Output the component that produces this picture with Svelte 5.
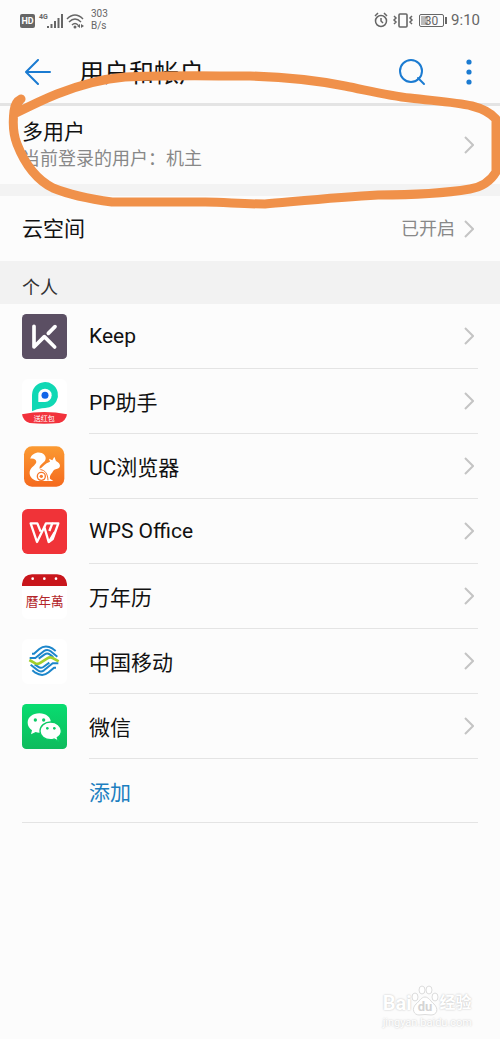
<script>
    const apps = [
        { id: "keep", name: "Keep" },
        { id: "pp", name: "PP助手" },
        { id: "uc", name: "UC浏览器" },
        { id: "wps", name: "WPS Office" },
        { id: "calendar", name: "万年历" },
        { id: "mobile", name: "中国移动" },
        { id: "wechat", name: "微信" },
    ];
</script>

{#snippet chevron()}
    <svg class="chevron" viewBox="0 0 10 18" aria-hidden="true">
        <path d="M1 1L9 9L1 17" />
    </svg>
{/snippet}

{#snippet appIcon(id)}
    <svg class="app-icon" viewBox="0 0 135 135" aria-hidden="true">
        {#if id === "keep"}
            <rect width="135" height="135" rx="13" fill="#5b4f63" />
            <g fill="none" stroke="#fff" stroke-width="11" stroke-linecap="round" stroke-linejoin="round">
                <path d="M36 37V99L67 68L98 99" />
                <path d="M79 58L99 38" />
            </g>
        {:else if id === "pp"}
            <rect width="135" height="135" rx="18" fill="#fff" />
            <path d="M30 97V48a39 39 0 1 1 52 37Q68 88 60 88Q44 90 30 97Z" fill="#10d8b4" />
            <path d="M49 69V49a20 20 0 1 1 20 20Z" fill="#fff" />
            <circle cx="69" cy="49" r="10.500" fill="#1266e8" />
            <path d="M0 106Q67 92 135 106Q132 126 112 132Q67 137 23 132Q3 126 0 106Z" fill="#f2323c" />
            <text x="67" y="126" text-anchor="middle" font-size="21" fill="#fff">送红包</text>
        {:else if id === "uc"}
            <defs>
                <linearGradient id="uc-fill" x1="0" y1="0" x2="0" y2="1">
                    <stop offset="0" stop-color="#fb9a32" />
                    <stop offset="1" stop-color="#f56a1e" />
                </linearGradient>
            </defs>
            <rect x="6" y="7" width="121" height="121" rx="24" fill="url(#uc-fill)" />
            <g transform="translate(-66 -26)">
                <path
                    d="M91 70C94 55 112 48 125 53C138 58 141 72 132 80C124 87 117 92 119 100C127 98 131 89 140 84C143 82 147 80 150 79L147 70L157 75L163 64L168 77C178 82 184 91 177 98C170 102 163 101 160 106C157 113 148 118 150 130L160 137H120C100 137 87 125 89 109C91 96 107 90 109 80C109 73 101 68 91 70Z"
                    fill="#fff"
                />
                <circle cx="124" cy="123" r="12" fill="none" stroke="#f6772a" stroke-width="4" />
                <circle cx="124" cy="123" r="5" fill="#f6772a" />
                <path d="M121 103C135 104 143 115 144 135" fill="none" stroke="#f6772a" stroke-width="3" />
            </g>
        {:else if id === "wps"}
            <rect width="135" height="135" rx="17" fill="#f03338" />
            <g fill="none" stroke="#fff" stroke-width="7" stroke-linejoin="round">
                <path d="M56 68L46 43H26L45 99L67 54L80 99L98 70" />
                <path d="M67 54L72 43H91L82 66" />
                <path d="M80 99L92 90L109 43H91" />
            </g>
        {:else if id === "calendar"}
            <rect width="135" height="135" rx="18" fill="#fff" />
            <path d="M0 36V30Q4 2 30 1H105Q131 2 135 30V36Z" fill="#c9161c" />
            <g fill="#fff">
                <circle cx="32" cy="14" r="4" />
                <circle cx="67" cy="14" r="4" />
                <circle cx="102" cy="14" r="4" />
            </g>
            <text class="seal" x="68" y="95" text-anchor="middle" font-size="38" fill="#b3262a">曆年萬</text>
        {:else if id === "mobile"}
            <rect width="135" height="135" rx="18" fill="#fff" />
            <g fill="none" stroke="#1c86cb" stroke-width="6" stroke-linejoin="round">
                {#each [0, 180] as turn}
                    <g transform="rotate({turn} 66 65)">
                        <path d="M30 44H36L52 30Q70 15 92 29L101 36" />
                        <path d="M23 57H40L66 36Q76 29 86 37L106 53" />
                        <path d="M50 59L68 46Q76 41 84 47L94 54" />
                    </g>
                {/each}
            </g>
            <path
                d="M22 63L40 73Q48 77 56 71L76 58Q84 53 92 57L110 67"
                fill="none"
                stroke="#a2cf2c"
                stroke-width="8"
                stroke-linejoin="round"
            />
        {:else if id === "wechat"}
            <defs>
                <linearGradient id="wechat-fill" x1="0" y1="0" x2="0" y2="1">
                    <stop offset="0" stop-color="#08dc70" />
                    <stop offset="1" stop-color="#0fbb5d" />
                </linearGradient>
            </defs>
            <rect width="135" height="135" rx="13" fill="url(#wechat-fill)" />
            <path d="M52 28C32 28 17 40 17 56C17 65 22 73 30 79L27 91L41 84Q46 86 52 86C72 86 87 73 87 57C87 40 72 28 52 28Z" fill="#fff" />
            <path
                d="M86 54C68 54 54 66 54 81C54 96 68 107 86 107Q91 107 96 105L109 111L106 101C114 96 118 89 118 81C118 66 104 54 86 54Z"
                fill="#fff"
                stroke="#0ccb66"
                stroke-width="4"
            />
            <g fill="#0ecb67">
                <circle cx="40" cy="48" r="5" />
                <circle cx="65" cy="48" r="5" />
                <circle cx="76" cy="73" r="4" />
                <circle cx="97" cy="73" r="4" />
            </g>
        {/if}
    </svg>
{/snippet}

<div class="page">
    <div class="status-bar">
        <svg width="66" height="18" viewBox="0 0 66 18" aria-hidden="true">
            <rect x="0" y="3" width="15" height="14" rx="2" fill="#666" />
            <text x="7.500" y="13" text-anchor="middle" font-size="9" font-weight="700" fill="#fff">HD</text>
            <text x="19" y="8" font-size="7" font-weight="700" fill="#666">4G</text>
            <path d="M28 17V15M31.500 17V13M35 17V10M38.500 17V7M42 17V3" stroke="#666" stroke-width="2" />
            <path
                d="M47 8Q55 0 63 8M49 11Q55 5 61 11M52 14Q55 11 58 14"
                fill="none"
                stroke="#666"
                stroke-width="1.500"
            />
            <circle cx="55" cy="16" r="1.500" fill="#666" />
            <path d="M60 13L57 15L60 17ZM61 13L64 15L61 17Z" fill="#666" />
        </svg>
        <div class="speed">
            <span>303</span>
            <span>B/s</span>
        </div>
        <div class="status-right">
            <svg width="74" height="16" viewBox="0 0 74 16" fill="none" stroke="#666" aria-hidden="true">
                <circle cx="7" cy="9" r="5.500" stroke-width="1.500" />
                <path d="M7 6V9L9 11M1 4L4 1M10 1L13 4" stroke-width="1.500" />
                <rect x="25" y="2" width="8" height="13" rx="1" stroke-width="1.600" />
                <path d="M20 4L22 6L20 8L22 10L20 12M38 4L36 6L38 8L36 10L38 12" stroke-width="1.500" />
                <rect x="45.500" y="2.500" width="24" height="12" rx="1.500" />
                <rect x="47" y="4" width="7" height="9" fill="#bbb" stroke="none" />
                <path d="M72 5V12" stroke-width="2" />
                <text x="57.500" y="13" text-anchor="middle" font-size="12" fill="#666" stroke="none">30</text>
            </svg>
            <time>9:10</time>
        </div>
    </div>

    <header class="header">
        <button class="icon-button" aria-label="返回">
            <svg width="26" height="26" viewBox="0 0 26 26">
                <path d="M25 13H2M13 1L1 13L13 25" />
            </svg>
        </button>
        <h1 class="title">用户和帐户</h1>
        <button class="icon-button" aria-label="搜索">
            <svg width="28" height="28" viewBox="0 0 28 28">
                <circle cx="13" cy="13" r="11" />
                <path d="M20 20L26 26" />
            </svg>
        </button>
        <button class="icon-button more" aria-label="更多">
            <svg width="6" height="26" viewBox="0 0 6 26">
                <circle class="dot" cx="3" cy="3" r="2.600" />
                <circle class="dot" cx="3" cy="13" r="2.600" />
                <circle class="dot" cx="3" cy="23" r="2.600" />
            </svg>
        </button>
    </header>

    <main>
        <button class="row users">
            <span class="label">
                多用户
                <small>当前登录的用户：机主</small>
            </span>
            {@render chevron()}
        </button>
        <button class="row cloud">
            <span class="label">云空间</span>
            <span class="value">已开启</span>
            {@render chevron()}
        </button>

        <h2 class="section">个人</h2>
        <ul class="apps">
            {#each apps as app}
                <li>
                    <button class="app">
                        {@render appIcon(app.id)}
                        <span class="app-name">
                            {app.name}
                            {@render chevron()}
                        </span>
                    </button>
                </li>
            {/each}
        </ul>
        <button class="add">添加</button>
    </main>

    <footer class="watermark">
        <div class="brand">
            <span>Bai</span>
            <svg width="28" height="32" viewBox="0 0 28 32" aria-hidden="true">
                <g fill="#fff" stroke="#dcdcdc">
                    <ellipse cx="4" cy="12" rx="3" ry="4" />
                    <ellipse cx="11" cy="5" rx="3" ry="4" />
                    <ellipse cx="18" cy="5" rx="3" ry="4" />
                    <ellipse cx="24" cy="12" rx="3" ry="4" />
                    <path d="M14 12C10 12 8 17 5 19C0 24 3 30 8 30Q14 29 20 30C26 30 28 24 23 19C20 17 18 12 14 12Z" />
                </g>
                <text class="du" x="14" y="26" text-anchor="middle" font-size="13" font-weight="700" fill="#d4d4d4">du</text>
            </svg>
            <span class="brand-cn">经验</span>
        </div>
        <div class="site">jingyan.baidu.com</div>
    </footer>

    <svg class="marker" viewBox="0 0 500 220" preserveAspectRatio="none" aria-hidden="true">
        <path
            d="M21 99Q16 103 16 113C30 106 42 100 57 94C80 85 100 79 125 77C165 75 210 76 250 76C285 77 320 81 345 86C370 91 390 96 410 98C435 101 455 102 472 106Q488 110 496 119V172C490 182 482 187 470 189C440 194 415 195 378 195C340 197 300 201 265 204C240 204 225 202 205 202H112C90 199 70 195 53 188C35 179 24 162 17 144C12 131 13 119 14 111Q15 102 21 99"
        />
    </svg>
</div>

<style>
    :global(body) {
        margin: 0;
        background-color: #fcfcfc;
    }

    .page {
        position: relative;
        display: flex;
        flex-direction: column;
        min-height: 100vh;
        color: #111111;
        font-family: Roboto, "Noto Sans CJK SC", sans-serif;
    }

    button {
        margin: 0;
        padding: 0;
        border: none;
        background: none;
        color: inherit;
        font: inherit;
        text-align: left;
        cursor: pointer;
    }

    .status-bar {
        display: flex;
        align-items: center;
        height: 40px;
        padding: 0 20px;
        color: #666666;
    }

    .speed {
        display: flex;
        flex-direction: column;
        margin-left: 5px;
        font-size: 10px;
        line-height: 12px;
    }

    .status-right {
        display: flex;
        align-items: center;
        gap: 3px;
        margin-left: auto;
        font-size: 15px;
    }

    .header {
        display: flex;
        align-items: center;
        height: 63px;
        padding: 0 28px 0 25px;
        border-bottom: 3px solid #e4e4e4;
    }

    .icon-button {
        display: flex;
    }

    .icon-button svg {
        fill: none;
        stroke: #1b7bd1;
        stroke-width: 2;
        stroke-linecap: round;
        stroke-linejoin: round;
    }

    .icon-button .dot {
        fill: #1b7bd1;
        stroke: none;
    }

    .more {
        margin-left: 40px;
    }

    .title {
        flex: 1;
        margin: 0 0 0 28px;
        padding-top: 5px;
        font-size: 25px;
        font-weight: 400;
        line-height: 32px;
    }

    .row {
        display: flex;
        align-items: center;
        padding: 0 26px 0 22px;
        font-size: 21px;
        line-height: 28px;
    }

    .users {
        min-height: 90px;
        border-bottom: 12px solid #f3f3f3;
    }

    .cloud {
        min-height: 65px;
    }

    main {
        display: flex;
        flex-direction: column;
    }

    .label {
        flex: 1;
    }

    .label small {
        display: block;
        color: #888888;
        font-size: 18px;
        line-height: 26px;
    }

    .value {
        margin-right: 9px;
        color: #888888;
        font-size: 18px;
    }

    .chevron {
        width: 10px;
        height: 18px;
        fill: none;
        stroke: #c4c4c4;
        stroke-width: 2;
    }

    .section {
        margin: 0;
        padding: 14px 22px 3px;
        background-color: #f2f2f2;
        color: #333333;
        font-size: 18px;
        font-weight: 400;
        line-height: 26px;
    }

    .apps {
        margin: 0;
        padding: 0;
        list-style: none;
    }

    .app {
        display: flex;
        align-items: center;
        width: 100%;
        padding: 0 22px;
    }

    .app-icon {
        width: 45px;
        height: 45px;
        margin-right: 22px;
    }

    .seal {
        font-family: "Noto Sans CJK TC", sans-serif;
    }

    .app-name {
        display: flex;
        flex: 1;
        align-items: center;
        justify-content: space-between;
        min-height: 64px;
        padding-right: 4px;
        border-bottom: 1px solid #e4e4e4;
        font-size: 21px;
    }

    .add {
        min-height: 64px;
        margin: 0 22px;
        padding-left: 67px;
        border-bottom: 1px solid #e4e4e4;
        color: #1c7fc0;
        font-size: 21px;
    }

    .watermark {
        align-self: flex-end;
        margin-top: auto;
        padding: 0 28px 10px 0;
        color: #ffffff;
        text-shadow: 0 0 2px #bbbbbb;
    }

    .brand {
        display: flex;
        align-items: flex-end;
        font-size: 20px;
        font-weight: 700;
        line-height: 28px;
    }

    .brand-cn {
        font-size: 16px;
    }

    .du {
        text-shadow: none;
    }

    .site {
        font-size: 11px;
        line-height: 12px;
    }

    .marker {
        position: absolute;
        top: 0;
        left: 0;
        width: 100%;
        height: 220px;
        fill: none;
        stroke: #f0914a;
        stroke-width: 9;
        stroke-linecap: round;
        stroke-linejoin: round;
        pointer-events: none;
    }
</style>
